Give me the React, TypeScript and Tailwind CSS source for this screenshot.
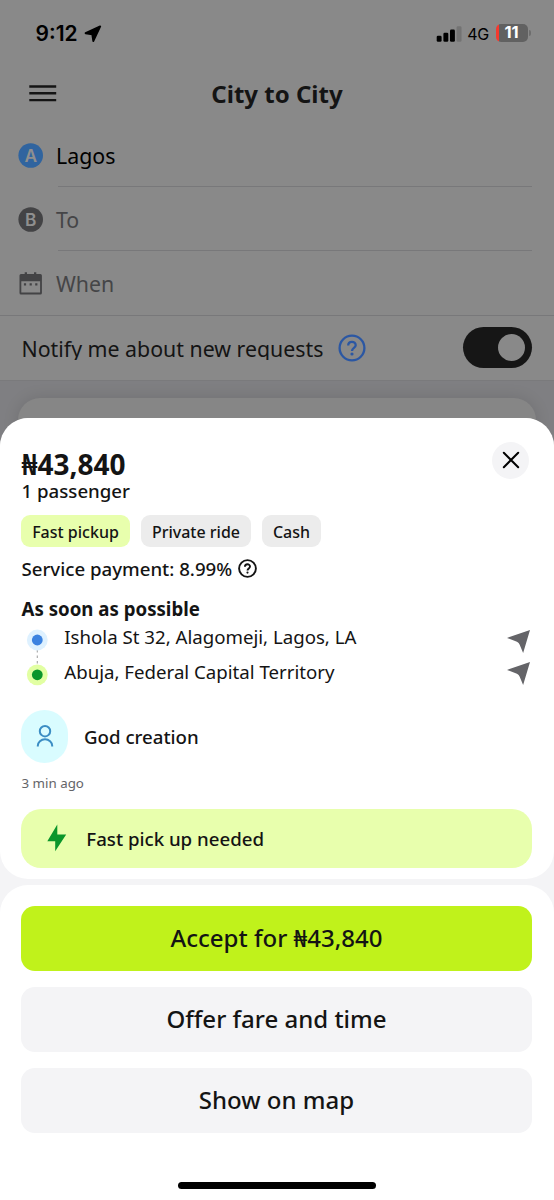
import type { ReactNode } from "react";

function StatusBar() {
  return (
    <div className="flex h-[66px] items-center pl-[35.5px] pr-[23px] pt-px font-['Inter',sans-serif] text-black">
      <span className="text-[21px] leading-[66px] font-semibold">9:12</span>
      <svg className="ml-[6px]" width="18" height="18" viewBox="0 0 18 18">
        <path d="M16.2 1.4 9.3 16 8.3 9.4 1.6 8.2Z" fill="#000" stroke="#000" strokeWidth="1.9" strokeLinejoin="round" />
      </svg>
      <svg className="ml-auto" width="26" height="16" viewBox="0 0 26 16">
        <rect x="0.7" y="9.7" width="4.9" height="6" rx="1.3" />
        <rect x="7.4" y="6.8" width="4.9" height="8.9" rx="1.3" />
        <rect x="14" y="3.6" width="4.9" height="12.1" rx="1.3" />
        <rect x="20.6" y="0.3" width="4.9" height="15.4" rx="1.3" fill="#737373" />
      </svg>
      <span className="ml-[5px] text-[16px] leading-[66px] tracking-[-0.3px]">4G</span>
      <div className="mb-[2px] ml-[7px] flex h-[18px] w-[32px] items-center justify-center overflow-hidden rounded-[5px] bg-[linear-gradient(90deg,#f5392e_3.5px,#616161_3.5px)] pr-[1px] text-[16.5px] font-bold text-white">
        11
      </div>
      <div className="mb-[2px] ml-[1px] h-[6px] w-[2px] rounded-r-full bg-[#6d6d6d]" />
    </div>
  );
}

function Badge({ letter, color }: { letter: string; color: string }) {
  return (
    <svg width="25" height="25" viewBox="0 0 25 25">
      <circle cx="12.7" cy="12.5" r="12.3" fill={color} />
      <text x="12.7" y="18.7" textAnchor="middle" fontFamily="Inter" fontWeight="600" fontSize="17.3" fill="#8f8f8f">
        {letter}
      </text>
    </svg>
  );
}

function CalendarIcon() {
  return (
    <svg width="25" height="25" viewBox="0 0 25 25" fill="#434345">
      <path
        fillRule="evenodd"
        d="M3 3H6.7V1.2H9V3H16V1.2H18.3V3H22.4Q23.9 3 23.9 4.5V21.9Q23.9 23.4 22.4 23.4H3Q1.5 23.4 1.5 21.9V4.5Q1.5 3 3 3ZM3.3 10.2V21.6H22.1V10.2Z"
      />
      <path d="M5.9 12.3h2.2v2.2h-2.2zM11.6 12.3h2.2v2.2h-2.2zM17.2 12.3h2.2v2.2h-2.2z" />
    </svg>
  );
}

function FieldRow({ icon, children, last, className }: { icon: ReactNode; children: ReactNode; last?: boolean; className: string }) {
  return (
    <div className={`flex items-stretch pl-[18px] ${last ? "" : "pr-[22px]"} ${className}`}>
      <div className="flex w-[40px] items-center">{icon}</div>
      <div className={`flex flex-1 items-center pt-[2px] ${last ? "" : "border-b border-[#78787a]"}`}>
        <span className="-ml-[2px]">{children}</span>
      </div>
    </div>
  );
}

function HelpIcon({ size, color, stroke }: { size: number; color: string; stroke: number }) {
  return (
    <svg width={size} height={size} viewBox="0 0 28 28" fill="none" stroke={color} strokeWidth={stroke}>
      <circle cx="14" cy="14" r="12.4" />
      <path d="M10.2 11.5C10.2 6.6 17.7 6.7 17.7 11.2C17.7 14 14 13.8 14 17" />
      <circle cx="14" cy="20" r="1.6" fill={color} stroke="none" />
    </svg>
  );
}

function SendArrow() {
  return (
    <svg width="23" height="23" viewBox="0 0 67 67">
      <path d="M67 0 47 67 37 43Q35 37 29 34L0 23Z" fill="#646468" />
    </svg>
  );
}

function Chip({ children, className }: { children: ReactNode; className: string }) {
  return (
    <span className={`flex h-[32px] items-center justify-center rounded-[9px] pt-[2px] text-[16px] font-medium ${className}`}>
      {children}
    </span>
  );
}

function ActionButton({ children, className }: { children: ReactNode; className: string }) {
  return (
    <button className={`flex h-[64.5px] w-full items-center justify-center rounded-[14px] text-[24px] font-medium ${className}`}>
      {children}
    </button>
  );
}

export default function App() {
  return (
    <div className="flex h-[1200px] w-[554px] flex-col overflow-hidden bg-[#7f7f82] font-['Noto_Sans',sans-serif] text-[#141414]">
      <div className="h-[381px] shrink-0 border-b border-[#7a7a7c] bg-[#898989]">
        <StatusBar />
        <header className="flex h-[54px] items-center pl-[29px]">
          <svg width="28" height="18" viewBox="0 0 28 18" stroke="#141414" strokeWidth="2.4">
            <path d="M0.3 2.5H27.2M0.3 9.3H27.2M0.3 16.1H27.2" />
          </svg>
          <h1 className="mr-[57px] flex-1 pt-px text-center text-[24px] leading-[54px] font-bold">City to City</h1>
        </header>
        <div className="pt-[3px] text-[21.33px]">
          <FieldRow className="h-[64px] text-black" icon={<Badge letter="A" color="#30649f" />}>
            Lagos
          </FieldRow>
          <FieldRow className="h-[64px] text-[#454547]" icon={<Badge letter="B" color="#434345" />}>
            To
          </FieldRow>
          <FieldRow last className="h-[65px] border-b border-[#78787a] text-[#454547]" icon={<CalendarIcon />}>
            When
          </FieldRow>
        </div>
        <div className="flex h-[63px] items-center pr-[22px] pl-[21.5px]">
          <span className="mt-[2px] h-[22px] overflow-hidden text-[21.33px] leading-[22px] whitespace-nowrap">Notify me about new requests</span>
          <span className="mt-px ml-[15px]">
            <HelpIcon size={28} color="#2b57a3" stroke={2.3} />
          </span>
          <div className="ml-auto flex h-[41px] w-[69px] items-center justify-end rounded-full bg-[#161616] pr-[7px]">
            <div className="size-[27px] rounded-full bg-[#898989]" />
          </div>
        </div>
      </div>

      <div className="mx-[18px] mt-[16.5px] -mb-[30px] h-[50px] shrink-0 rounded-t-[22px] bg-[#868686] shadow-[0_0_16px_rgba(0,0,0,0.12)]" />

      <main className="relative flex flex-1 flex-col gap-[6px] rounded-t-[30px] bg-[#f4f4f6]">
        <section className="h-[461px] rounded-[28px] bg-white pt-[24px] pr-[22px] pl-[21px]">
          <div className="flex items-start justify-between">
            <div className="pt-[6px] pl-[0.5px]">
              <div className="text-[28px] leading-[32px] font-bold">₦43,840</div>
              <div className="text-[18.67px] leading-[22px] font-medium">1 passenger</div>
            </div>
            <button className="mr-[3px] flex size-[37px] items-center justify-center rounded-full bg-[#f4f4f6]">
              <svg width="18" height="18" viewBox="0 0 18 18" stroke="#000" strokeWidth="2" strokeLinecap="round">
                <path d="M1.8 1.8 16.2 16.2M16.2 1.8 1.8 16.2" />
              </svg>
            </button>
          </div>

          <div className="mt-[13px] flex gap-[11px]">
            <Chip className="w-[109px] bg-[#e8ffad]">Fast pickup</Chip>
            <Chip className="w-[110px] bg-[#ececec]">Private ride</Chip>
            <Chip className="w-[59px] bg-[#ececec]">Cash</Chip>
          </div>

          <div className="mt-[11px] flex h-[22px] items-center pl-[0.5px] text-[18.67px] leading-[22px] font-medium">
            Service payment: 8.99%
            <span className="ml-[5.5px]">
              <HelpIcon size={19} color="#141414" stroke={2.8} />
            </span>
          </div>

          <div className="mt-[18px] pl-[0.5px] text-[18.67px] leading-[22px] font-bold">As soon as possible</div>

          <div className="-mt-px flex h-[71px]">
            <svg className="ml-[5px] shrink-0" width="22" height="70" viewBox="0 0 22 70">
              <path d="M11.3 31V46" stroke="#a5a5a5" strokeWidth="1.1" strokeDasharray="2.5 3" />
              <circle cx="11.3" cy="21" r="10.4" fill="#def1ff" />
              <circle cx="11.3" cy="21" r="5.4" fill="#3b82e0" />
              <circle cx="11.3" cy="55.8" r="10.4" fill="#e2ffa3" />
              <circle cx="11.3" cy="55.8" r="5.4" fill="#0b962b" />
            </svg>
            <div className="ml-[16.3px] flex-1 text-[18.67px] leading-[35px]">
              <div>Ishola St 32, Alagomeji, Lagos, LA</div>
              <div>Abuja, Federal Capital Territory</div>
            </div>
            <div className="mr-[2.5px] flex flex-col gap-[9.5px] pt-[11px]">
              <SendArrow />
              <SendArrow />
            </div>
          </div>

          <div className="mt-[20px] flex items-center gap-[16px]">
            <div className="flex h-[53px] w-[47px] items-center justify-center rounded-full bg-[#d9fcff]">
              <svg width="18" height="24" viewBox="0 0 18 24" fill="none" stroke="#3b8dc4" strokeWidth="2">
                <circle cx="9" cy="7.2" r="5.2" />
                <path d="M1.8 22.5V21.8A7.2 6.5 0 0 1 16.2 21.8V22.5" />
              </svg>
            </div>
            <span className="pt-px text-[18.67px] font-medium">God creation</span>
          </div>
          <div className="mt-[9px] pl-[0.5px] text-[13.33px] leading-[22px] text-[#646468]">3 min ago</div>

          <div className="mt-[15.4px] flex h-[59px] items-center rounded-[20px] bg-[#e8ffad] pl-[26px] text-[18.67px] font-medium">
            <svg width="20" height="28" viewBox="0 0 20 28">
              <path d="M10.3 0.5V10.5H19.2L8.2 27.3V17.2H0.3Z" fill="#0b962b" />
            </svg>
            <span className="ml-[19.3px] pt-px">Fast pick up needed</span>
          </div>
        </section>

        <section className="flex flex-1 flex-col items-center gap-[16.5px] rounded-t-[28px] bg-white pt-[21.5px] pr-[22px] pl-[21px]">
          <ActionButton className="bg-[#c0f21b]">Accept for ₦43,840</ActionButton>
          <ActionButton className="bg-[#f4f4f6]">Offer fare and time</ActionButton>
          <ActionButton className="bg-[#f4f4f6]">Show on map</ActionButton>
          <div className="mt-auto mb-[11px] h-[7px] w-[198px] rounded-full bg-black" />
        </section>
      </main>
    </div>
  );
}
